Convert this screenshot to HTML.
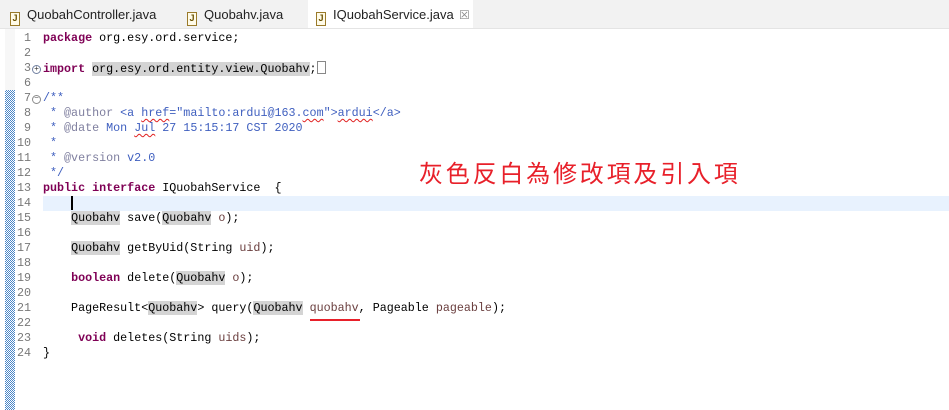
<!DOCTYPE html>
<html><head><meta charset="utf-8"><style>
body{margin:0;width:949px;height:410px;background:#fff;overflow:hidden;position:relative;font-family:"Liberation Mono",monospace;}
.tabs{position:absolute;left:0;top:0;width:949px;height:28px;background:#f2f2f2;border-bottom:1px solid #e4e4e4;font-family:"Liberation Sans",sans-serif;font-size:13px;color:#222;}
.tab{position:absolute;top:0;height:28px;line-height:30px;white-space:nowrap;}
.tab .ic{display:inline-block;width:8px;height:12px;border:1px solid #9a7a2a;background:#fffbe8;vertical-align:-2px;margin-right:7px;font-size:9px;line-height:11px;text-align:center;color:#6a5000;font-weight:bold}
.active{background:#fff;}
.gut{position:absolute;left:5px;top:29px;width:10px;height:381px;background:#f7f7f7;}
.hatch{position:absolute;left:5px;top:90px;width:10px;height:320px;background-color:#fff;background-image:repeating-conic-gradient(#4a86c8 0 25%,#ffffff 0 50%);background-size:2px 2px;}
.ln{position:absolute;left:0;width:31px;text-align:right;color:#787878;font-size:11.7px;}
.code{position:absolute;left:43px;font-size:11.7px;color:#000;white-space:pre;}
.row{position:absolute;height:15px;line-height:15px;}
.k{color:#7f0055;font-weight:bold}
.c{color:#3f5fbf}
.ct{color:#7f7f9f}
.v{color:#6a3e3e}
.hl{background:#d4d4d4}
.sq{text-decoration:underline wavy #e02020;text-decoration-thickness:1px;text-underline-offset:2px}
</style></head><body>
<div class="tabs">
 <div class="tab" style="left:10px"><span class="ic">J</span>QuobahController.java</div>
 <div class="tab" style="left:187px"><span class="ic">J</span>Quobahv.java</div>
 <div class="tab active" style="left:308px;width:165px;padding-left:8px;box-sizing:border-box"><span class="ic">J</span>IQuobahService.java<span style="position:absolute;left:151px;top:0;color:#888;font-size:12px">☒</span></div>
</div>
<div class="gut"></div><div class="hatch"></div>
<div class="row" style="left:43px;top:196px;width:906px;height:15px;background:#e8f2fe"></div>
<div style="position:absolute;left:71px;top:196px;width:2px;height:14px;background:#000"></div>
<div id="lines"></div>
<div style="position:absolute;left:310px;top:319px;width:50px;height:2px;background:#e8202a"></div>
<div style="position:absolute;left:419px;top:160px;font-family:'Liberation Sans','Noto Sans CJK TC',sans-serif;font-size:24px;letter-spacing:2.8px;color:#e8202a;line-height:30px;white-space:nowrap">灰色反白為修改項及引入項</div>
<script>
var L=[
["1",'<span class="k">package</span> org.esy.ord.service;'],
["2",''],
["3",'<span class="k">import</span> <span class="hl">org.esy.ord.entity.view.Quobahv</span>;<span style="border:1px solid #888;display:inline-block;width:7px;height:11px;vertical-align:-2px"></span>'],
["6",''],
["7",'<span class="c">/**</span>'],
["8",'<span class="c"> * </span><span class="ct">@author</span><span class="c"> &lt;a <span class="sq">href</span>="mailto:ardui@163.<span class="sq">com</span>"&gt;<span class="sq">ardui</span>&lt;/a&gt;</span>'],
["9",'<span class="c"> * </span><span class="ct">@date</span><span class="c"> Mon <span class="sq">Jul</span> 27 15:15:17 CST 2020</span>'],
["10",'<span class="c"> *</span>'],
["11",'<span class="c"> * </span><span class="ct">@version</span><span class="c"> v2.0</span>'],
["12",'<span class="c"> */</span>'],
["13",'<span class="k">public</span> <span class="k">interface</span> IQuobahService  {'],
["14",''],
["15",'    <span class="hl">Quobahv</span> save(<span class="hl">Quobahv</span> <span class="v">o</span>);'],
["16",''],
["17",'    <span class="hl">Quobahv</span> getByUid(String <span class="v">uid</span>);'],
["18",''],
["19",'    <span class="k">boolean</span> delete(<span class="hl">Quobahv</span> <span class="v">o</span>);'],
["20",''],
["21",'    PageResult&lt;<span class="hl">Quobahv</span>&gt; query(<span class="hl">Quobahv</span> <span class="v">quobahv</span>, Pageable <span class="v">pageable</span>);'],
["22",''],
["23",'     <span class="k">void</span> deletes(String <span class="v">uids</span>);'],
["24",'}']];
var h='';
for(var i=0;i<L.length;i++){var t=31+i*15;
h+='<div class="row ln" style="top:'+t+'px">'+L[i][0]+'</div><div class="row code" style="top:'+t+'px">'+L[i][1]+'</div>';}
h+='<div style="position:absolute;left:32px;top:65px;width:7px;height:7px;border:1px solid #6f7fa0;border-radius:50%;font-size:8px;line-height:7px;text-align:center;color:#333">+</div>';
h+='<div style="position:absolute;left:32px;top:95px;width:7px;height:7px;border:1px solid #8a8a8a;border-radius:50%;font-size:8px;line-height:6px;text-align:center;color:#555">−</div>';
document.getElementById('lines').innerHTML=h;
</script>
</body></html>
